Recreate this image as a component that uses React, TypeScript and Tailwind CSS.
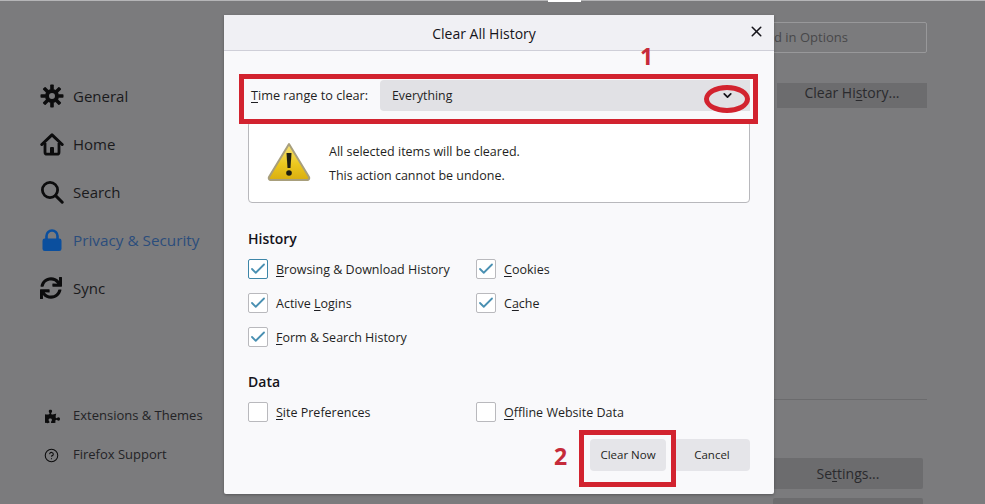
import { FaPuzzlePiece, FaSync } from "react-icons/fa";
import { Check, ChevronDown, CircleHelp, X } from "lucide-react";

function Gear() {
  return (
    <svg width="24" height="24" viewBox="0 0 24 24">
      <g fill="#0c0c0d">
        <path d="M12 5a7 7 0 1 0 0 14 7 7 0 0 0 0-14zm0 4a3 3 0 1 1 0 6 3 3 0 0 1 0-6z" fillRule="evenodd" />
        <rect x="10.2" y="0.5" width="3.6" height="5.5" rx="0.8" />
        <rect x="10.2" y="18" width="3.6" height="5.5" rx="0.8" />
        <rect x="0.5" y="10.2" width="5.5" height="3.6" rx="0.8" />
        <rect x="18" y="10.2" width="5.5" height="3.6" rx="0.8" />
        <rect x="10.2" y="0.5" width="3.6" height="5.5" rx="0.8" transform="rotate(45 12 12)" />
        <rect x="10.2" y="18" width="3.6" height="5.5" rx="0.8" transform="rotate(45 12 12)" />
        <rect x="0.5" y="10.2" width="5.5" height="3.6" rx="0.8" transform="rotate(45 12 12)" />
        <rect x="18" y="10.2" width="5.5" height="3.6" rx="0.8" transform="rotate(45 12 12)" />
      </g>
    </svg>
  );
}

function HomeIcon() {
  return (
    <svg width="24" height="24" viewBox="0 0 24 24" fill="none" stroke="#0c0c0d">
      <path d="M1.8 12.5 12 2.8l10.2 9.7" strokeWidth="3" strokeLinecap="round" strokeLinejoin="round" />
      <path d="M5 11v9.2a2 2 0 0 0 2 2h10a2 2 0 0 0 2-2V11" strokeWidth="2.8" />
      <path d="M10 21v-5a1 1 0 0 1 1-1h2a1 1 0 0 1 1 1v5z" fill="#0c0c0d" stroke="none" />
    </svg>
  );
}

function SearchIcon() {
  return (
    <svg width="24" height="24" viewBox="0 0 24 24" fill="none" stroke="#0c0c0d">
      <circle cx="10" cy="10" r="7.6" strokeWidth="2.8" />
      <path d="m15.6 15.6 6.6 6.6" strokeWidth="3" strokeLinecap="round" />
    </svg>
  );
}

function LockIcon() {
  return (
    <svg width="24" height="24" viewBox="0 0 24 24">
      <path d="M6.5 11V8a5.5 5.5 0 0 1 11 0v3" fill="none" stroke="#0b4f9e" strokeWidth="2.6" />
      <rect x="2.5" y="10.5" width="19" height="12.5" rx="2.2" fill="#0b4f9e" />
    </svg>
  );
}

const navItems = [
  { label: "Home", icon: <HomeIcon /> },
  { label: "Search", icon: <SearchIcon /> },
  { label: "Privacy & Security", icon: <LockIcon />, active: true },
  { label: "Sync", icon: <FaSync size={22} /> },
];

function WarningIcon() {
  return (
    <svg width="44" height="40" viewBox="0 0 44 40">
      <defs>
        <linearGradient id="warn" x1="0" y1="0" x2="0" y2="1">
          <stop offset="0" stopColor="#f6e27a" />
          <stop offset="0.55" stopColor="#ecc81f" />
          <stop offset="1" stopColor="#d9ae10" />
        </linearGradient>
      </defs>
      <path d="M22 2 42 35a2 2 0 0 1-2 3H4a2 2 0 0 1-2-3z" fill="url(#warn)" stroke="#a89f7c" strokeWidth="2" strokeLinejoin="round" />
      <path d="M19.5 11h5l-1 15h-3z" fill="#1d1d12" />
      <circle cx="22" cy="31" r="2.8" fill="#1d1d12" />
    </svg>
  );
}

function CheckRow({ u, rest, pre = "", checked = true, focused = false }: { u: string; rest: string; pre?: string; checked?: boolean; focused?: boolean }) {
  return (
    <div className="flex items-center gap-2 h-[20px]">
      <span
        className={
          focused
            ? "w-5 h-5 shrink-0 flex items-center justify-center rounded-[2px] bg-white border border-[#3d86a8]"
            : "w-5 h-5 shrink-0 flex items-center justify-center rounded-[2px] bg-white border border-[#b9b9bd]"
        }
      >
        {checked && <Check size={18} strokeWidth={2.4} className="text-[#4a90b2]" />}
      </span>
      <span className="text-[12.5px] text-[#1f1f23] translate-y-px">
        {pre}
        <span className="underline underline-offset-2">{u}</span>
        {rest}
      </span>
    </div>
  );
}

export default function App() {
  return (
    <div className="relative w-[985px] h-[504px] overflow-hidden bg-[#7b7b7d] flex font-['Open_Sans','Noto_Sans',sans-serif]">
      {/* Sidebar */}
      <aside className="w-[224px] h-full shrink-0 pl-[40px] pt-[72px] flex flex-col text-[#1a1a1c]">
        <div className="flex items-center h-[48px] shrink-0">
          <span className="w-[33px] shrink-0 flex">
            <Gear />
          </span>
          <span className="text-[15px]">General</span>
        </div>
        {navItems.map((item) => (
          <div key={item.label} className="flex items-center h-[48px] shrink-0">
            <span className="w-[33px] shrink-0 flex text-[#0c0c0d]">{item.icon}</span>
            <span className={item.active ? "text-[15.3px] text-[#2b4d7c]" : "text-[15px]"}>{item.label}</span>
          </div>
        ))}
        <div className="mt-[94px] flex flex-col gap-[19px] text-[13px] text-[#232326]">
          <div className="flex items-center h-[20px]">
            <span className="w-[33px] pl-[5px] shrink-0 flex text-[#0c0c0d]">
              <FaPuzzlePiece size={15} />
            </span>
            <span>Extensions &amp; Themes</span>
          </div>
          <div className="flex items-center h-[20px]">
            <span className="w-[33px] pl-[4px] shrink-0 flex text-[#0c0c0d]">
              <CircleHelp size={15} strokeWidth={1.7} />
            </span>
            <span>Firefox Support</span>
          </div>
        </div>
      </aside>

      {/* Page behind the dialog */}
      <main className="flex-1 flex flex-col items-end pr-[58px] pt-[22px] text-[#2a2a2d]">
        <div className="w-[300px] h-[31px] shrink-0 border border-[#98989a] rounded-[2px] flex items-center pl-[146px] text-[13px] text-[#48484a]">
          <span className="whitespace-nowrap">d in Options</span>
        </div>
        <div className="mt-[30px] w-[150px] h-[25px] shrink-0 bg-[#6c6c6e] flex justify-center text-[14px] leading-[20px]">
          <span>
            Clear Hi<span className="underline underline-offset-2">s</span>tory...
          </span>
        </div>
        <div className="mt-[291px] w-[300px] h-px shrink-0 bg-[#6b6b6d]" />
        <div className="mt-[58px] w-[150px] mr-[4px] h-[31px] shrink-0 bg-[#6c6c6e] rounded-[2px] flex items-center justify-center text-[14px]">
          <span>
            Se<span className="underline underline-offset-2">t</span>tings...
          </span>
        </div>
        <div className="mt-[9px] w-[150px] mr-[4px] h-[20px] shrink-0 bg-[#6c6c6e] rounded-[2px]" />
      </main>

      {/* top edge of the page */}
      <div className="absolute top-0 left-0 right-0 h-px bg-[#b5b5b7]" />
      <div className="absolute top-0 left-[548px] w-[33px] h-[2px] bg-white" />

      {/* Dialog */}
      <div className="absolute left-[224px] top-[15px] w-[550px] h-[479px] bg-[#f9f9fb] rounded-b-[2px] shadow-[0_1px_3px_rgba(0,0,0,0.3)] flex flex-col">
        <header className="relative h-[36px] shrink-0 bg-[#f0f0f4] border-b border-[#cfcfd8] flex items-center justify-center pr-[30px] pt-[2px] text-[14px] font-medium text-[#15141a]">
          Clear All History
          <X size={17} strokeWidth={2.2} className="absolute right-[9px] top-[8px] text-[#15141a]" />
        </header>

        <div className="flex-1 pl-[24px] pr-[24px] flex flex-col">
          <div className="mt-[29px] h-[31px] flex items-center text-[12.7px] text-[#1f1f23]">
            <span className="w-[132px] pl-[3px] shrink-0">
              <span className="underline underline-offset-2">T</span>ime range to clear:
            </span>
            <div className="flex-1 h-full bg-[#e1e1e5] rounded-l-[4px] flex items-center justify-between pl-[12px] pr-[16px]">
              <span className="text-[12.3px] translate-y-px">Everything</span>
              <ChevronDown size={13} strokeWidth={3.2} className="text-[#15141a]" />
            </div>
          </div>

          <div className="mt-[10px] h-[82px] shrink-0 bg-white border border-[#b8b8bc] rounded-[4px] flex items-center pl-[18px] text-[12.5px] text-[#1f1f23]">
            <span className="w-[62px] shrink-0 flex">
              <WarningIcon />
            </span>
            <div className="flex flex-col gap-[6px] leading-[18px] pt-[4px]">
              <span>All selected items will be cleared.</span>
              <span>This action cannot be undone.</span>
            </div>
          </div>

          <h3 className="mt-[26px] text-[14px] font-semibold leading-[20px] text-[#15141a]">History</h3>
          <div className="mt-[10px] grid grid-cols-[228px_1fr] gap-y-[14px]">
            <CheckRow u="B" rest="rowsing & Download History" focused />
            <CheckRow u="C" rest="ookies" />
            <CheckRow pre="Active " u="L" rest="ogins" />
            <CheckRow pre="C" u="a" rest="che" />
            <CheckRow u="F" rest="orm & Search History" />
          </div>

          <h3 className="mt-[25px] text-[14px] font-semibold leading-[20px] text-[#15141a]">Data</h3>
          <div className="mt-[10px] grid grid-cols-[228px_1fr]">
            <CheckRow u="S" rest="ite Preferences" checked={false} />
            <CheckRow u="O" rest="ffline Website Data" checked={false} />
          </div>

          <div className="mt-[17px] flex justify-end gap-[8px] text-[11.5px] text-[#1f1f23]">
            <button className="w-[76px] h-[32px] pb-px bg-[#e5e5e9] rounded-[4px]">Clear Now</button>
            <button className="w-[76px] h-[32px] pb-px bg-[#e5e5e9] rounded-[4px]">Cancel</button>
          </div>
        </div>
      </div>

      {/* Red annotations */}
      <div className="absolute left-[239px] top-[74px] w-[519px] h-[50px] border-[5px] border-[#d2232f]" />
      <div className="absolute left-[704px] top-[85px] w-[46px] h-[28px] rounded-[50%] border-[5px] border-[#d2232f]" />
      <div className="absolute left-[579px] top-[430px] w-[97px] h-[57px] border-[5px] border-[#d2232f]" />
      <span className="absolute left-[640px] top-[41px] text-[23px] leading-[30px] font-bold text-[#c62b3a]">1</span>
      <span className="absolute left-[554px] top-[441px] text-[23px] leading-[30px] font-bold text-[#c62b3a]">2</span>
    </div>
  );
}
